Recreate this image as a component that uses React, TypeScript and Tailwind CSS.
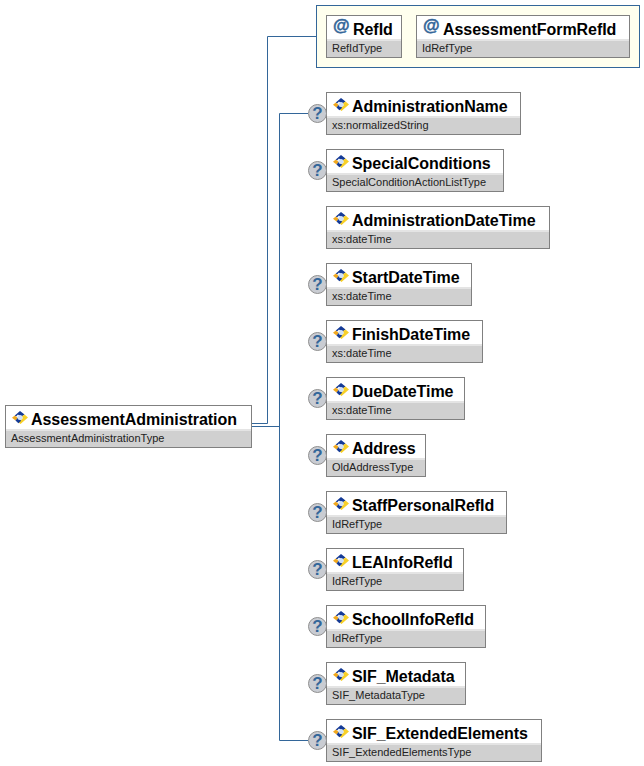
const attributes = [
  { name: "RefId", type: "RefIdType" },
  { name: "AssessmentFormRefId", type: "IdRefType" },
]

const elements = [
  { name: "AdministrationName", type: "xs:normalizedString", width: "w-[195px]", optional: true },
  { name: "SpecialConditions", type: "SpecialConditionActionListType", width: "w-[178px]", optional: true },
  { name: "AdministrationDateTime", type: "xs:dateTime", width: "w-[224px]", optional: false },
  { name: "StartDateTime", type: "xs:dateTime", width: "w-[146px]", optional: true },
  { name: "FinishDateTime", type: "xs:dateTime", width: "w-[157px]", optional: true },
  { name: "DueDateTime", type: "xs:dateTime", width: "w-[139px]", optional: true },
  { name: "Address", type: "OldAddressType", width: "w-[100px]", optional: true },
  { name: "StaffPersonalRefId", type: "IdRefType", width: "w-[181px]", optional: true },
  { name: "LEAInfoRefId", type: "IdRefType", width: "w-[138px]", optional: true },
  { name: "SchoolInfoRefId", type: "IdRefType", width: "w-[160px]", optional: true },
  { name: "SIF_Metadata", type: "SIF_MetadataType", width: "w-[140px]", optional: true },
  { name: "SIF_ExtendedElements", type: "SIF_ExtendedElementsType", width: "w-[216px]", optional: true },
]

function ElementIcon() {
  return (
    <svg width="16" height="13" viewBox="0 0 16 13" className="shrink-0">
      <path d="M8 0 L12.5 3.4 L9 6 L6 3.5 L4 5.5 L2.8 4.4 Z" fill="#143a96" />
      <path d="M2.8 4.4 L0 6.8 L3.5 9.6 L5.8 7 Z" fill="#f0a81e" />
      <path d="M12.5 3.4 L16 6.6 L8.5 13 L6.2 11 L11 7 L9.5 5.4 Z" fill="#f8d028" />
      <path d="M3.5 9.6 L6.4 12.2 L9.2 9.8 L5.8 6.8 Z" fill="#143a96" />
      <circle cx="8" cy="6.6" r="2.5" fill="#cfe0f6" />
    </svg>
  )
}

function OptionalBadge() {
  return (
    <div className="absolute left-[-18px] top-[12px] flex h-[19px] w-[19px] items-center justify-center rounded-full border border-[#8f8f8f] bg-[#c9ccd2] text-[17px] font-bold leading-none text-[#336699]">
      ?
    </div>
  )
}

function Node({ name, type, width, icon }: { name: string; type: string; width: string; icon: React.ReactNode }) {
  return (
    <div className={`relative h-[43px] border border-[#808080] bg-white ${width}`}>
      <div className="flex h-[23px] items-center gap-[3px] whitespace-nowrap pl-[6px] text-[16px] font-bold leading-none tracking-[-0.05px] text-black">
        {icon}
        <span className="pt-[4px]">{name}</span>
      </div>
      <div className="h-[18px] whitespace-nowrap border-t-2 border-[#e4e4e4] bg-[#d0d0d0] pl-[5px] text-[11px] leading-[15px] text-[#222222]">
        {type}
      </div>
    </div>
  )
}

export default function App() {
  return (
    <div className="relative flex h-[766px] w-[644px] overflow-hidden bg-white font-['Liberation_Sans',Arial,sans-serif]">
      {/* connector lines */}
      <svg width="644" height="766" className="absolute left-0 top-0" fill="none" stroke="#336699">
        <path d="M252 423.5 H267.5 V36.5 H316" />
        <path d="M252 426.5 H279.5" />
        <path d="M308 113.5 H279.5 V740.5 H308" />
      </svg>

      <div className="w-[316px] shrink-0 pl-[5px] pt-[405px]">
        <Node
          name="AssessmentAdministration"
          type="AssessmentAdministrationType"
          width="w-[247px]"
          icon={<ElementIcon />}
        />
      </div>

      <div className="relative flex flex-col pt-[5px]">
        <div className="flex h-[63px] w-[324px] gap-[14px] border border-[#336699] bg-[#ffffee] pl-[9px] pt-[9px]">
          {attributes.map((a) => (
            <Node
              key={a.name}
              name={a.name}
              type={a.type}
              width={a.name === "RefId" ? "w-[76px]" : "w-[214px]"}
              icon={
                <span className="w-[17px] pb-[5px] text-[17px] font-bold leading-none tracking-normal text-[#336699] [-webkit-text-stroke:0.5px_#336699]">
                  @
                </span>
              }
            />
          ))}
        </div>

        <div className="mt-[24px] flex flex-col gap-[14px] pl-[10px]">
          {elements.map((el) => (
            <div key={el.name} className="relative">
              <Node name={el.name} type={el.type} width={el.width} icon={<ElementIcon />} />
              {el.optional && <OptionalBadge />}
            </div>
          ))}
        </div>
      </div>
    </div>
  )
}
